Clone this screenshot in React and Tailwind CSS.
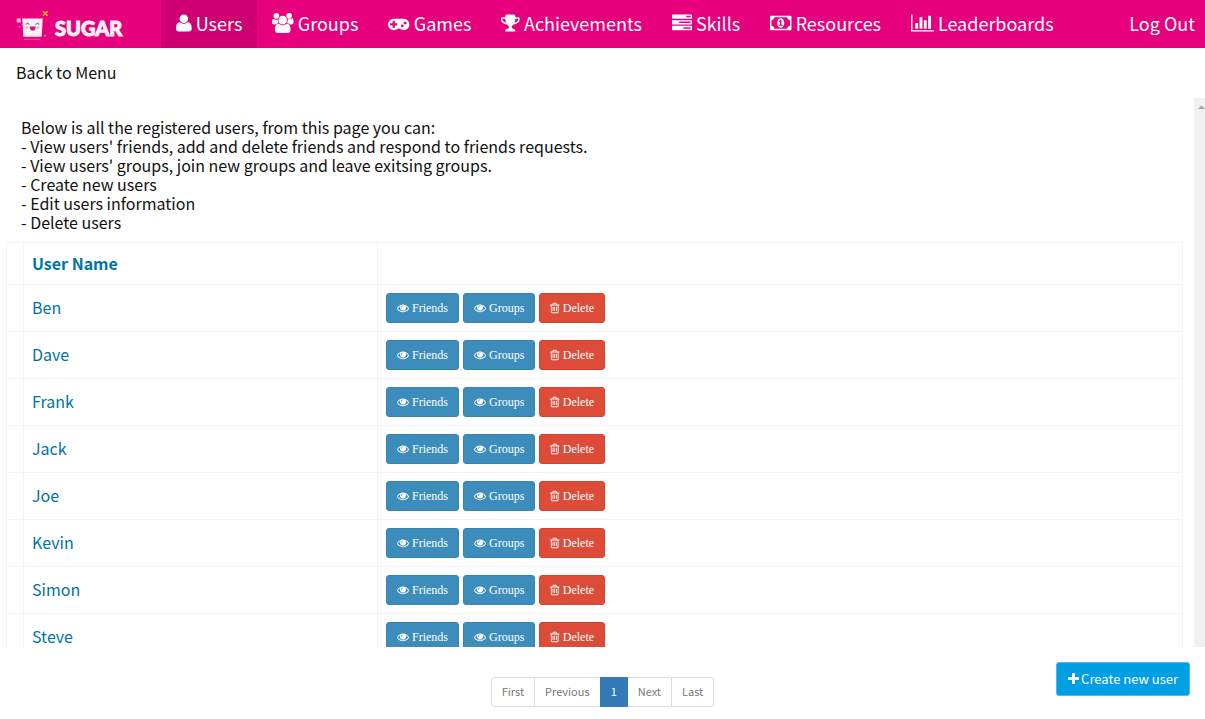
const ICONS = {
  user: {
    box: "192 0 1408 1792",
    d: "M1600 1405q0 120-73 189.5t-194 69.5h-874q-121 0-194-69.5t-73-189.5q0-53 3.5-103.5t14-109 26.5-108.5 43-97.5 62-81 85.5-53.5 111.5-20q9 0 42 21.5t74.5 48 108 48 133.5 21.5 133.5-21.5 108-48 74.5-48 42-21.5q61 0 111.5 20t85.5 53.5 62 81 43 97.5 26.5 108.5 14 109 3.5 103.5zm-320-893q0 159-112.5 271.5t-271.5 112.5-271.5-112.5-112.5-271.5 112.5-271.5 271.5-112.5 271.5 112.5 112.5 271.5z",
  },
  users: {
    box: "64 0 1920 1792",
    d: "M657 896q-162 5-265 128h-134q-82 0-138-40.5t-56-118.5q0-353 124-353 6 0 43.5 21t97.5 42.5 119 21.5q67 0 133-23-5 37-5 66 0 159 93 293zm1071 637q0 120-73 189.5t-194 69.5h-874q-121 0-194-69.5t-73-189.5q0-53 3.5-103.5t14-109 26.5-108.5 43-97.5 62-81 85.5-53.5 111.5-20q10 0 43 21.5t73 48 107 48 135 21.5 135-21.5 107-48 73-48 43-21.5q61 0 111.5 20t85.5 53.5 62 81 43 97.5 26.5 108.5 14 109 3.5 103.5zm-1024-1277q0 106-75 181t-181 75-181-75-75-181 75-181 181-75 181 75 75 181zm704 384q0 159-112.5 271.5t-271.5 112.5-271.5-112.5-112.5-271.5 112.5-271.5 271.5-112.5 271.5 112.5 112.5 271.5zm576 225q0 78-56 118.5t-138 40.5h-134q-103-123-265-128 93-134 93-293 0-29-5-66 66 23 133 23 59 0 119-21.5t97.5-42.5 43.5-21q124 0 124 353zm-128-609q0 106-75 181t-181 75-181-75-75-181 75-181 181-75 181 75 75 181z",
  },
  gamepad: {
    box: "0 0 1920 1792",
    d: "M832 1088v-128q0-14-9-23t-23-9h-192v-192q0-14-9-23t-23-9h-128q-14 0-23 9t-9 23v192h-192q-14 0-23 9t-9 23v128q0 14 9 23t23 9h192v192q0 14 9 23t23 9h128q14 0 23-9t9-23v-192h192q14 0 23-9t9-23zm576 64q0-53-37.5-90.5t-90.5-37.5-90.5 37.5-37.5 90.5 37.5 90.5 90.5 37.5 90.5-37.5 37.5-90.5zm256-256q0-53-37.5-90.5t-90.5-37.5-90.5 37.5-37.5 90.5 37.5 90.5 90.5 37.5 90.5-37.5 37.5-90.5zm256 128q0 212-150 362t-362 150q-192 0-338-128h-220q-146 128-338 128-212 0-362-150t-150-362 150-362 362-150h896q212 0 362 150t150 362z",
  },
  trophy: {
    box: "64 0 1664 1792",
    d: "M522 883q-74-162-74-371h-256v96q0 78 94.5 162t235.5 113zm1078-275v-96h-256q0 209-74 371 141-29 235.5-113t94.5-162zm128-128v128q0 71-41.5 143t-112 130-173 97.5-215.5 44.5q-42 54-95 95-38 34-52.5 72.5t-14.5 89.5q0 54 30.5 91t97.5 37q75 0 133.5 45.5t58.5 114.5v64q0 14-9 23t-23 9h-832q-14 0-23-9t-9-23v-64q0-69 58.5-114.5t133.5-45.5q67 0 97.5-37t30.5-91q0-51-14.5-89.5t-52.5-72.5q-53-41-95-95-113-5-215.5-44.5t-173-97.5-112-130-41.5-143v-128q0-40 28-68t68-28h288v-96q0-66 47-113t113-47h576q66 0 113 47t47 113v96h288q40 0 68 28t28 68z",
  },
  tasks: {
    box: "0 0 1792 1792",
    d: "M1024 1408h640v-128h-640v128zm-384-512h1024v-128h-1024v128zm640-512h384v-128h-384v128zm512 832v256q0 26-19 45t-45 19h-1664q-26 0-45-19t-19-45v-256q0-26 19-45t45-19h1664q26 0 45 19t19 45zm0-512v256q0 26-19 45t-45 19h-1664q-26 0-45-19t-19-45v-256q0-26 19-45t45-19h1664q26 0 45 19t19 45zm0-512v256q0 26-19 45t-45 19h-1664q-26 0-45-19t-19-45v-256q0-26 19-45t45-19h1664q26 0 45 19t19 45z",
  },
  money: {
    box: "0 0 1920 1792",
    d: "M768 1152h384v-96h-128v-448h-114l-148 137 77 80q42-37 55-57h2v288h-128v96zm512-256q0 70-21 142t-59.5 134-101.5 101-138 39-138-39-101.5-101-59.5-134-21-142 21-142 59.5-134 101.5-101 138-39 138 39 101.5 101 59.5 134 21 142zm512 256v-512q-106 0-181-75t-75-181h-1152q0 106-75 181t-181 75v512q106 0 181 75t75 181h1152q0-106 75-181t181-75zm128-832v1152q0 26-19 45t-45 19h-1792q-26 0-45-19t-19-45v-1152q0-26 19-45t45-19h1792q26 0 45 19t19 45z",
  },
  chart: {
    box: "0 0 2048 1792",
    d: "M640 896v512h-256v-512h256zm384-512v1024h-256v-1024h256zm1024 1152v128h-2048v-1536h128v1408h1920zm-640-896v768h-256v-768h256zm384-384v1152h-256v-1152h256z",
  },
  eye: {
    box: "0 0 1792 1792",
    d: "M1664 960q-152-236-381-353 61 104 61 225 0 185-131.5 316.5t-316.5 131.5-316.5-131.5-131.5-316.5q0-121 61-225-229 117-381 353 133 205 333.5 326.5t434.5 121.5 434.5-121.5 333.5-326.5zm-720-384q0-20-14-34t-34-14q-125 0-214.5 89.5t-89.5 214.5q0 20 14 34t34 14 34-14 14-34q0-86 61-147t147-61q20 0 34-14t14-34zm848 384q0 34-20 69-140 230-376.5 368.5t-499.5 138.5-499.5-139-376.5-368q-20-35-20-69t20-69q140-229 376.5-368t499.5-139 499.5 139 376.5 368q20 35 20 69z",
  },
  trash: {
    box: "192 0 1408 1792",
    d: "M704 736v576q0 14-9 23t-23 9h-64q-14 0-23-9t-9-23v-576q0-14 9-23t23-9h64q14 0 23 9t9 23zm256 0v576q0 14-9 23t-23 9h-64q-14 0-23-9t-9-23v-576q0-14 9-23t23-9h64q14 0 23 9t9 23zm256 0v576q0 14-9 23t-23 9h-64q-14 0-23-9t-9-23v-576q0-14 9-23t23-9h64q14 0 23 9t9 23zm128 724v-948h-896v948q0 22 7 40.5t14.5 27 10.5 8.5h832q3 0 10.5-8.5t14.5-27 7-40.5zm-672-1076h448l-48-117q-7-9-17-11h-317q-10 2-17 11zm928 32v64q0 14-9 23t-23 9h-96v948q0 83-47 143.5t-113 60.5h-832q-66 0-113-58.5t-47-141.5v-952h-96q-14 0-23-9t-9-23v-64q0-14 9-23t23-9h309l70-167q15-37 54-63t79-26h320q40 0 79 26t54 63l70 167h309q14 0 23 9t9 23z",
  },
  plus: {
    box: "192 0 1408 1792",
    d: "M1600 736v192q0 40-28 68t-68 28h-416v416q0 40-28 68t-68 28h-192q-40 0-68-28t-28-68v-416h-416q-40 0-68-28t-28-68v-192q0-40 28-68t68-28h416v-416q0-40 28-68t68-28h192q40 0 68 28t28 68v416h416q40 0 68 28t28 68z",
  },
};

function Icon({ name, className }) {
  return (
    <svg viewBox={ICONS[name].box} className={`w-auto shrink-0 ${className}`} fill="currentColor" aria-hidden="true">
      <path d={ICONS[name].d} />
    </svg>
  );
}

const NAV = [
  ["user", "Users"],
  ["users", "Groups"],
  ["gamepad", "Games"],
  ["trophy", "Achievements"],
  ["tasks", "Skills"],
  ["money", "Resources"],
  ["chart", "Leaderboards"],
];

const USERS = ["Ben", "Dave", "Frank", "Jack", "Joe", "Kevin", "Simon", "Steve"];

const PAGES = ["First", "Previous", "1", "Next", "Last"];

function Logo() {
  return (
    <a href="#" className="flex w-[161px] shrink-0 items-center pl-4 text-[#f8eff4]">
      <svg viewBox="0 0 34 32" className="h-8 w-[34px] shrink-0" aria-hidden="true">
        <path d="M27 3.200l4.500 4.500M31.500 3.200l-4.500 4.500" stroke="#f5c400" strokeWidth="1.400" />
        <rect x="0.700" y="10.500" width="4" height="4" fill="#f7c4de" />
        <rect x="2.800" y="18" width="1.500" height="1.500" fill="#f280ba" />
        <path d="M6.300 10.500h20.400l-1 18.200H7.300z" fill="#f8eff4" />
        <path d="M9.800 16.500q1.800-2.600 3.600 0M19.600 16.500q1.800-2.600 3.600 0" stroke="#8f2a66" strokeWidth="1" fill="none" />
        <path d="M13.600 18.500h6.200q-.4 4.200-3.100 4.200t-3.100-4.200z" fill="#c22275" />
        <circle cx="11" cy="19.500" r="1.200" fill="#f5a9cf" />
        <circle cx="22" cy="19.500" r="1.200" fill="#f5a9cf" />
        <rect x="28.300" y="27" width="1.500" height="1.500" fill="#f7a8d0" />
        <rect x="8" y="30.700" width="16" height="1" fill="#f04fa3" />
      </svg>
      <span className="pt-2 pl-[5px] font-['Lato',sans-serif] text-[20px] leading-6 font-black [-webkit-text-stroke:1px_#f8eff4]">
        SUGAR
      </span>
    </a>
  );
}

function Header() {
  return (
    <header className="flex h-12 shrink-0 bg-[#e6007e] text-white">
      <Logo />
      <nav className="flex flex-1 text-lg leading-6">
        {NAV.map(([icon, label], i) => (
          <a
            key={label}
            href="#"
            className={`flex items-center gap-1 px-[15px] pb-[2px] ${i === 0 ? "bg-[#cf0071]" : ""}`}
          >
            <Icon name={icon} className="h-5" />
            {label}
          </a>
        ))}
        <a href="#" className="ml-auto flex items-center pr-[10px] pb-[2px] whitespace-nowrap">
          Log Out
        </a>
      </nav>
    </header>
  );
}

function RowButton({ icon, label, color }) {
  return (
    <button
      type="button"
      className={`flex h-[30px] items-center gap-[3px] rounded-[3px] border px-[10px] font-['Liberation_Serif',serif] text-xs text-white ${color}`}
    >
      <Icon name={icon} className="h-3" />
      {label}
    </button>
  );
}

function UserTable() {
  return (
    <table className="w-full table-fixed border-collapse text-left text-base text-[#0073a3] [&_td]:border [&_td]:border-[#f4f4f4] [&_th]:border [&_th]:border-[#f4f4f4]">
      <colgroup>
        <col className="w-[17px]" />
        <col className="w-[354px]" />
        <col />
      </colgroup>
      <thead>
        <tr className="h-[42px]">
          <th></th>
          <th className="px-2 pb-[2px] font-bold">User Name</th>
          <th></th>
        </tr>
      </thead>
      <tbody>
        {USERS.map((name) => (
          <tr key={name} className="h-[47px]">
            <td></td>
            <td className="px-2 pb-[2px]">{name}</td>
            <td className="px-2">
              <div className="flex gap-1">
                <RowButton icon="eye" label="Friends" color="border-[#3884b0] bg-[#3c8dbc]" />
                <RowButton icon="eye" label="Groups" color="border-[#3884b0] bg-[#3c8dbc]" />
                <RowButton icon="trash" label="Delete" color="border-[#d9422f] bg-[#dd4b39]" />
              </div>
            </td>
          </tr>
        ))}
      </tbody>
    </table>
  );
}

function Footer() {
  return (
    <footer className="grid h-[72px] shrink-0 grid-cols-[1fr_auto_1fr] items-start pt-[15px]">
      <nav aria-label="Pagination" className="col-start-2 mt-[15px] flex pl-px text-[11px] leading-[18px]">
        {PAGES.map((page) => (
          <a
            key={page}
            href="#"
            className={`-ml-px border px-[10px] pt-1 pb-[6px] first:rounded-l-[3px] last:rounded-r-[3px] ${
              page === "1" ? "z-10 border-[#337ab7] bg-[#337ab7] text-white" : "border-[#ddd] bg-white text-[#777]"
            }`}
          >
            {page}
          </a>
        ))}
      </nav>
      <button
        type="button"
        className="mr-[15px] flex h-[34px] items-center gap-[2px] justify-self-end rounded-[3px] border border-[#4dbcec] bg-[#009ee3] px-[11px] text-[13px] text-white"
      >
        <Icon name="plus" className="h-[14px]" />
        Create new user
      </button>
    </footer>
  );
}

export default function App() {
  return (
    <div className="flex h-screen flex-col bg-white font-['Noto_Sans_CJK_SC',sans-serif] text-[#111]">
      <Header />
      <div className="flex h-[50px] shrink-0 items-center pb-[2px] pl-4">
        <a href="#" className="text-base">Back to Menu</a>
      </div>
      <div className="flex min-h-0 flex-1">
        <main className="flex-1 overflow-y-auto pr-[11px] pl-[6px] [scrollbar-width:none]">
          <div className="pt-5 pb-[10px] pl-[15px] text-base leading-[19px]">
            <p>Below is all the registered users, from this page you can:</p>
            <ul>
              <li>- View users' friends, add and delete friends and respond to friends requests.</li>
              <li>- View users' groups, join new groups and leave exitsing groups.</li>
              <li>- Create new users</li>
              <li>- Edit users information</li>
              <li>- Delete users</li>
            </ul>
          </div>
          <UserTable />
        </main>
        <div className="flex w-[11px] shrink-0 justify-end bg-[#f1f1f1] pt-[7px]">
          <svg viewBox="0 0 7 4" className="h-1 w-[7px]" aria-hidden="true">
            <path d="M0 4L3.500 0.500L7 4z" fill="#a3a3a3" />
          </svg>
        </div>
      </div>
      <Footer />
    </div>
  );
}
